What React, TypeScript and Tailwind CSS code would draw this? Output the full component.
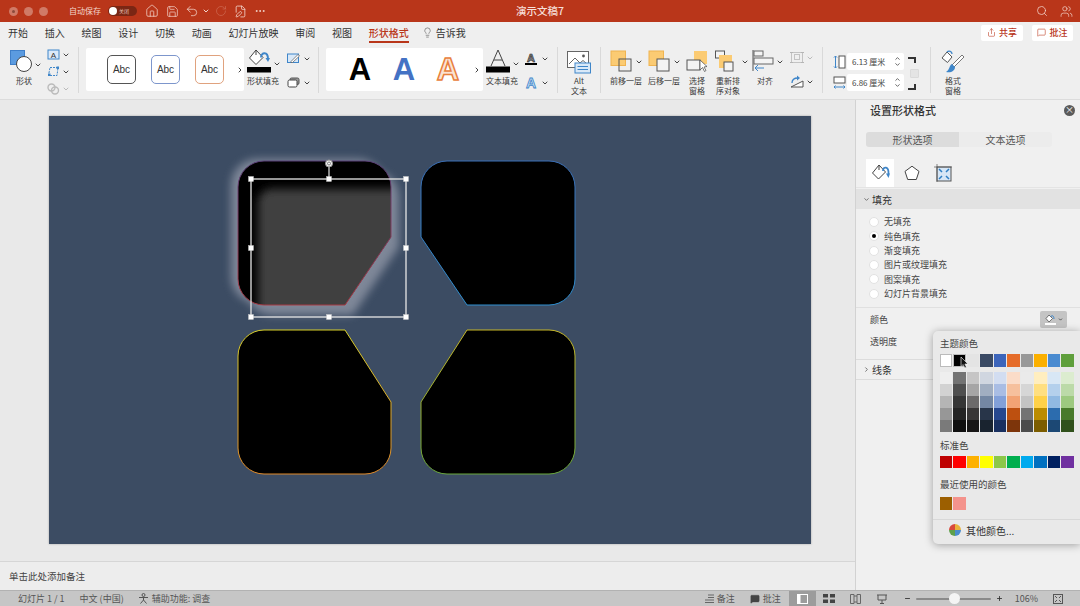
import React from "react";
import { ChevronDown, ChevronRight, ChevronUp, Home, Save, Undo2, RotateCw, FilePen, Ellipsis, Search, Users, Lightbulb, Share, MessageSquare, Plus, Minus } from "lucide-react";

const CJK = "font-['Noto_Sans_CJK_SC','Noto_Sans',sans-serif]";

const tabs = ["开始", "插入", "绘图", "设计", "切换", "动画", "幻灯片放映", "审阅", "视图"];
const fillOptions = ["无填充", "纯色填充", "渐变填充", "图片或纹理填充", "图案填充", "幻灯片背景填充"];

const themeRow = ["#ffffff", "#000000", "#e4e4e4", "#3a4a64", "#3c65bb", "#e56c2a", "#989898", "#fbb000", "#4a8bd0", "#5f9f3c"];
const themeRamps = [
  ["#eeeeee", "#d2d2d2", "#b5b5b5", "#979797", "#7a7a7a"],
  ["#737373", "#4f4f4f", "#363636", "#242424", "#0f0f0f"],
  ["#c6c5c5", "#a6a5a5", "#6c6a6a", "#383636", "#171616"],
  ["#d0d6e0", "#a1aec1", "#7487a3", "#283549", "#19232f"],
  ["#d2ddf1", "#a9bde4", "#82a0d9", "#27488f", "#193060"],
  ["#fbdcc8", "#f6c09d", "#f2a374", "#bd5010", "#7d350b"],
  ["#eaeaea", "#d6d6d6", "#c3c3c3", "#737373", "#4c4c4c"],
  ["#ffeebf", "#ffdf80", "#ffd148", "#bb8c00", "#7c5d00"],
  ["#d8e7f5", "#b4d0ec", "#90b9e2", "#2c6cae", "#1c4874"],
  ["#dceccf", "#bcdaa8", "#9dc97f", "#487a2a", "#30511c"],
];
const standardColors = ["#be0000", "#ff0000", "#fdb100", "#ffff00", "#8cc748", "#00ae4e", "#00aaee", "#0070c0", "#002060", "#7030a0"];

const shapeTL = "M264 161H365A26 26 0 0 1 391 187V237L345 305H264A26 26 0 0 1 238 279V187A26 26 0 0 1 264 161Z";
const shapeTR = "M447 161H549A26 26 0 0 1 575 187V279A26 26 0 0 1 549 305H467L421 237V187A26 26 0 0 1 447 161Z";
const shapeBL = "M264 330H345L391 402V448A26 26 0 0 1 365 474H264A26 26 0 0 1 238 448V356A26 26 0 0 1 264 330Z";
const shapeBR = "M467 330H549A26 26 0 0 1 575 356V448A26 26 0 0 1 549 474H447A26 26 0 0 1 421 448V402Z";

const handles = [
  [251, 179], [329, 179], [406, 179],
  [251, 248], [406, 248],
  [251, 317], [329, 317], [406, 317],
];

const Chev = ({ className = "" }: { className?: string }) => (
  <ChevronDown className={`w-[8px] h-[8px] text-[#444] shrink-0 ${className}`} strokeWidth={3} />
);

const Divider = () => <div className="w-px h-[46px] mt-[4px] bg-[#d9d9d9] shrink-0" />;

const Label = ({ children }: { children: React.ReactNode }) => (
  <div className="text-[8px] leading-[9.5px] text-[#3a3a3a] text-center whitespace-nowrap">{children}</div>
);

const ShapesIcon = () => (
  <svg width="23" height="23" viewBox="0 0 23 23">
    <rect x="0.5" y="0.5" width="14" height="14" fill="#5b9be0" stroke="#3f7fc9" />
    <circle cx="14" cy="14" r="7.5" fill="#fff" stroke="#444" />
  </svg>
);

const TextBoxIcon = () => (
  <svg width="13" height="11" viewBox="0 0 13 11">
    <rect x="1" y="1" width="11" height="9" fill="#dbe9f8" stroke="#3f86c9" />
    <text x="6.5" y="8.5" fontSize="8" textAnchor="middle" fill="#333" fontFamily="Liberation Sans">A</text>
  </svg>
);

const EditPointsIcon = () => (
  <svg width="13" height="11" viewBox="0 0 13 11">
    <path d="M3 1.5H11L10 9.5H1.5Z" fill="none" stroke="#3f86c9" strokeDasharray="2 1" />
    <rect x="1" y="7.5" width="2.5" height="2.5" fill="#3f86c9" />
    <rect x="9.5" y="0.5" width="2.5" height="2.5" fill="#3f86c9" />
  </svg>
);

const MergeIcon = () => (
  <svg width="13" height="12" viewBox="0 0 13 12">
    <circle cx="4.5" cy="4.5" r="3.5" fill="none" stroke="#bbb" strokeWidth="1.4" />
    <circle cx="8" cy="7.5" r="3.5" fill="none" stroke="#bbb" strokeWidth="1.4" />
  </svg>
);

const BucketIcon = ({ bar = "#000" }: { bar?: string }) => (
  <svg width="25" height="25" viewBox="0 0 25 25">
    <path d="M9 2L2.5 10L9 16.5L16 9.5Z" fill="#fff" stroke="#444" />
    <path d="M9 2V7" stroke="#444" />
    <path d="M14 9.5C14 4 21 3 21 11" fill="none" stroke="#3f86c9" strokeWidth="2" />
    <path d="M18.5 10H23L21 14Z" fill="#3f86c9" />
    <rect x="0" y="19" width="24" height="5.5" fill={bar} />
  </svg>
);

const PenOutlineIcon = () => (
  <svg width="13" height="11" viewBox="0 0 13 11">
    <rect x="0.5" y="1" width="11" height="8.5" fill="#d8e8f8" stroke="#3f86c9" />
    <path d="M4 8.5L11 1.5L12.5 3L5.5 9.5H4Z" fill="#fff" stroke="#555" strokeWidth="0.7" />
  </svg>
);

const EffectIcon = () => (
  <svg width="13" height="11" viewBox="0 0 13 11">
    <rect x="3" y="1" width="9" height="6.5" rx="1.5" fill="#999" stroke="#555" />
    <rect x="1" y="3" width="9" height="7" rx="1.5" fill="#fff" stroke="#444" />
  </svg>
);

const TextFillIcon = () => (
  <svg width="25" height="25" viewBox="0 0 25 25">
    <path d="M5 18L12 2L19 18M8 12H16" fill="none" stroke="#444" strokeWidth="1" />
    <rect x="0" y="18.5" width="24" height="6" fill="#000" />
  </svg>
);

const AltTextIcon = () => (
  <svg width="24" height="23" viewBox="0 0 24 23">
    <rect x="0.5" y="0.5" width="21" height="16" fill="#fff" stroke="#666" />
    <path d="M2 13L8 7L13 12L16 9.5L20 13" fill="none" stroke="#666" />
    <circle cx="16.5" cy="5" r="1.4" fill="#555" />
    <rect x="8" y="12" width="15.5" height="10" fill="#d9e9f8" stroke="#3f86c9" />
    <path d="M10.5 15.5H21M10.5 18.5H21" stroke="#3f86c9" />
  </svg>
);

const ForwardIcon = ({ back = false }: { back?: boolean }) => (
  <svg width="22" height="22" viewBox="0 0 22 22">
    <rect x="1" y="1" width="14.5" height="14.5" fill="#fbcb73" stroke="#f0b451" />
    <rect x="9" y="9" width="12" height="12" fill={back ? "#f4f4f4" : "none"} stroke="#555" />
  </svg>
);

const PaneIcon = () => (
  <svg width="22" height="22" viewBox="0 0 22 22">
    <rect x="8" y="1" width="13" height="13" fill="#fbcb73" />
    <rect x="1" y="10" width="13" height="10" fill="#f4f4f4" stroke="#555" />
    <path d="M14 10L14 20L16.5 17.5L18.5 21.5L20 20.5L18 17L21 16.5Z" fill="#fff" stroke="#555" strokeWidth="0.8" />
  </svg>
);

const ReorderIcon = () => (
  <svg width="23" height="23" viewBox="0 0 23 23">
    <rect x="0.5" y="1" width="9" height="7" fill="#f4f4f4" stroke="#555" />
    <rect x="4" y="5" width="13" height="13" fill="#fbcb73" />
    <rect x="9" y="12" width="9" height="9" fill="#f4f4f4" stroke="#555" />
  </svg>
);

const AlignIcon = () => (
  <svg width="22" height="22" viewBox="0 0 22 22">
    <path d="M1 0V21" stroke="#555" />
    <rect x="2" y="1" width="9" height="5" fill="#f4f4f4" stroke="#666" />
    <rect x="2" y="8" width="19" height="6" fill="#f4f4f4" stroke="#666" />
    <path d="M12 18H3M6 15L3 18L6 21" fill="none" stroke="#3f86c9" />
  </svg>
);

const GroupIcon = () => (
  <svg width="14" height="13" viewBox="0 0 14 13">
    <rect x="1.5" y="1.5" width="11" height="10" fill="none" stroke="#c3c3c3" />
    <rect x="4.5" y="3.5" width="5" height="5" fill="none" stroke="#c3c3c3" />
    <path d="M0 1.5H3M11 1.5H14M0 11.5H3M11 11.5H14" stroke="#b5b5b5" />
  </svg>
);

const RotateIcon = () => (
  <svg width="14" height="13" viewBox="0 0 14 13">
    <path d="M1 12H13V6Z" fill="#fff" stroke="#555" />
    <path d="M2 8C2 4 5 3 8 3" fill="none" stroke="#3f86c9" strokeWidth="1.3" />
    <path d="M7 0.5L10 3L7 5.5Z" fill="#3f86c9" />
  </svg>
);

const HeightIcon = () => (
  <svg width="13" height="14" viewBox="0 0 13 14">
    <path d="M2.5 1V13M1 2.5L2.5 1L4 2.5M1 11.5L2.5 13L4 11.5" fill="none" stroke="#3f86c9" />
    <rect x="6" y="1" width="6" height="12" fill="#fff" stroke="#555" />
  </svg>
);

const WidthIcon = () => (
  <svg width="13" height="14" viewBox="0 0 13 14">
    <rect x="1" y="1" width="11" height="6" fill="#fff" stroke="#555" />
    <path d="M1 11H12M2.5 9.5L1 11L2.5 12.5M10.5 9.5L12 11L10.5 12.5" fill="none" stroke="#3f86c9" />
  </svg>
);

const PainterIcon = () => (
  <svg width="25" height="24" viewBox="0 0 25 24">
    <path d="M6 2L1 8L6.5 12.5L11 7Z" fill="#fff" stroke="#555" />
    <path d="M6 2C8 0 11 1.5 11 4" fill="none" stroke="#3f86c9" strokeWidth="1.3" />
    <path d="M23 7L13 17L11 15L21 5Z" fill="#fff" stroke="#555" strokeWidth="0.8" />
    <path d="M11 14C8 15 9 20 5 22C10 23 14 21 14 17Z" fill="#3f86c9" />
  </svg>
);

const Spinner = () => (
  <div className="flex flex-col items-center -space-y-[1px]">
    <ChevronUp className="w-[7px] h-[7px] text-[#555]" strokeWidth={3} />
    <ChevronDown className="w-[7px] h-[7px] text-[#555]" strokeWidth={3} />
  </div>
);

const SizeInput = ({ value }: { value: string }) => (
  <div className="w-[57px] h-[17px] bg-white rounded-[2px] flex items-center justify-between pl-[5px] pr-[3px] text-[8px] text-[#444]">
    <span className="whitespace-nowrap">{value}</span>
    <Spinner />
  </div>
);

const AbcBox = ({ border }: { border: string }) => (
  <div className={`w-[29px] h-[29px] rounded-[5px] border flex items-center justify-center text-[10px] text-[#333] font-['Liberation_Sans',sans-serif] ${border}`}>
    Abc
  </div>
);

const TitleBar = () => (
  <div className="h-[22px] bg-[#b9361a] flex items-center relative shrink-0 text-white">
    <div className="flex items-center gap-[6px] pl-[9px] w-[69px]">
      {[0, 1, 2].map((i) => (
        <div key={i} className="w-[9px] h-[9px] rounded-full bg-[#d07a66] flex items-center justify-center">
          {i === 0 && <div className="w-[3px] h-[3px] rounded-full bg-[#8c4a3c]" />}
        </div>
      ))}
    </div>
    <span className="text-[8px] text-[#f3d6cd] w-[39px] whitespace-nowrap">自动保存</span>
    <div className="w-[29px] h-[10px] rounded-full bg-[#7a2614] flex items-center pl-[1px] gap-[2px]">
      <div className="w-[8px] h-[8px] rounded-full bg-white" />
      <span className="text-[5px] text-[#e8c4ba]">关闭</span>
    </div>
    <div className="flex items-center ml-[8px] text-[#f3d6cd]">
      <Home className="w-[14px] h-[14px]" strokeWidth={1.3} />
      <Save className="w-[13px] h-[13px] ml-[7px]" strokeWidth={1.3} />
      <Undo2 className="w-[14px] h-[14px] ml-[6px]" strokeWidth={1.3} />
      <ChevronDown className="w-[8px] h-[8px] ml-[3px]" strokeWidth={3} />
      <RotateCw className="w-[12px] h-[12px] ml-[5px] text-[#cf6d56]" strokeWidth={1.3} />
      <FilePen className="w-[13px] h-[13px] ml-[7px]" strokeWidth={1.5} />
      <Ellipsis className="w-[12px] h-[12px] ml-[7px]" strokeWidth={2} />
    </div>
    <span className="absolute left-0 right-0 text-center text-[10.5px] font-medium text-[#f6dfd8] pointer-events-none">演示文稿7</span>
    <div className="ml-auto flex items-center gap-[12px] pr-[7px] text-[#f3d6cd]">
      <Search className="w-[12px] h-[12px]" strokeWidth={1.5} />
      <Users className="w-[13px] h-[13px]" strokeWidth={1.3} />
    </div>
  </div>
);

const TabBar = () => (
  <div className="h-[21px] bg-[#efefef] flex items-center pl-[8px] shrink-0 text-[10px] text-[#333]">
    <div className="flex items-center gap-[16.75px]">
      {tabs.map((t) => (
        <span key={t} className="whitespace-nowrap">{t}</span>
      ))}
      <span className="relative font-medium text-[#b9361a] whitespace-nowrap">
        形状格式
        <span className="absolute left-0 right-0 -bottom-[3px] h-[2px] bg-[#b9361a]" />
      </span>
    </div>
    <Lightbulb className="w-[11px] h-[11px] ml-[13px] text-[#555]" strokeWidth={1.3} />
    <span className="ml-[3px] whitespace-nowrap">告诉我</span>
    <div className="ml-auto flex items-center gap-[9px] pr-[7px]">
      <div className="w-[42px] h-[16px] bg-white rounded-[2px] flex items-center justify-center gap-[3px] text-[9px] font-medium text-[#b9361a]">
        <Share className="w-[9px] h-[9px]" strokeWidth={1.5} />
        共享
      </div>
      <div className="w-[41px] h-[16px] bg-white rounded-[2px] flex items-center justify-center gap-[3px] text-[9px] font-medium text-[#b9361a]">
        <MessageSquare className="w-[9px] h-[9px]" strokeWidth={1.5} />
        批注
      </div>
    </div>
  </div>
);

const Ribbon = () => (
  <div className="h-[57px] bg-[#efefef] border-b border-[#dcdcdc] flex items-start pl-[8px] shrink-0">
    {/* 形状 */}
    <div className="w-[70px] flex pt-[7px] shrink-0">
      <div className="flex flex-col items-center w-[32px]">
        <div className="flex items-end pr-[5px]">
          <ShapesIcon />
        </div>
        <div className="mt-[3px]"><Label>形状</Label></div>
      </div>
      <Chev className="mt-[11px] -ml-[6px]" />
      <div className="flex flex-col gap-[6px] ml-[5px] -mt-[1px]">
        <div className="flex items-center gap-[2px]"><TextBoxIcon /><Chev /></div>
        <div className="flex items-center gap-[2px]"><EditPointsIcon /><Chev /></div>
        <div className="flex items-center gap-[2px]"><MergeIcon /><Chev className="opacity-30" /></div>
      </div>
    </div>
    <Divider />
    {/* 样式 */}
    <div className="w-[158px] h-[43px] ml-[7px] mt-[5px] bg-white rounded-[2px] flex items-center pl-[21px] gap-[15px] shrink-0">
      <AbcBox border="border-[#555555]" />
      <AbcBox border="border-[#7d96cc]" />
      <AbcBox border="border-[#e0a27e]" />
      <ChevronRight className="w-[8px] h-[8px] -ml-[3px] text-[#444]" strokeWidth={3} />
    </div>
    {/* 形状填充 */}
    <div className="w-[74px] flex pt-[5px] shrink-0">
      <div className="flex flex-col items-start w-[31px] ml-[3px]">
        <BucketIcon />
        <div className="mt-[3px]"><Label>形状填充</Label></div>
      </div>
      <Chev className="mt-[12px] -ml-[5px]" />
      <div className="flex flex-col gap-[13px] ml-[6px] mt-[5px]">
        <div className="flex items-center gap-[3px]"><PenOutlineIcon /><Chev /></div>
        <div className="flex items-center gap-[3px]"><EffectIcon /><Chev /></div>
      </div>
    </div>
    <Divider />
    {/* 艺术字 */}
    <div className="w-[157px] h-[43px] ml-[7px] mt-[5px] bg-white rounded-[2px] flex items-center pl-[12px] shrink-0 font-['Liberation_Sans',sans-serif] font-bold">
      <span className="w-[44px] text-center text-[31px] leading-none text-black">A</span>
      <span className="w-[44px] text-center text-[31px] leading-none text-[#4472c4]">A</span>
      <span className="w-[44px] text-center text-[31px] leading-none text-[#fbe3d2] [-webkit-text-stroke:1.5px_#e8803c]">A</span>
      <ChevronRight className="w-[8px] h-[8px] text-[#444] ml-[3px]" strokeWidth={3} />
    </div>
    {/* 文本填充 */}
    <div className="w-[74px] flex pt-[5px] shrink-0">
      <div className="flex flex-col items-start w-[32px] ml-[3px]">
        <TextFillIcon />
        <div className="mt-[3px]"><Label>文本填充</Label></div>
      </div>
      <Chev className="mt-[12px] -ml-[6px]" />
      <div className="flex flex-col gap-[12px] ml-[5px] mt-[5px] font-['Liberation_Sans',sans-serif]">
        <div className="flex items-center gap-[4px]">
          <span className="w-[12px] h-[12px] text-[11px] leading-[10px] text-center font-bold text-[#888] border-b-2 border-black [-webkit-text-stroke:0.6px_#222]">A</span>
          <Chev />
        </div>
        <div className="flex items-center gap-[4px]">
          <span className="w-[12px] h-[12px] text-[14px] leading-[12px] text-center font-bold text-[#cde2f6] [-webkit-text-stroke:0.8px_#3f86c9]">A</span>
          <Chev />
        </div>
      </div>
    </div>
    <Divider />
    {/* Alt 文本 */}
    <div className="w-[42px] flex flex-col items-center pt-[8px] shrink-0">
      <AltTextIcon />
      <div className="mt-[2px]"><Label>Alt<br />文本</Label></div>
    </div>
    <Divider />
    {/* 排列 */}
    <div className="w-[221px] flex pt-[7px] pl-[9px] shrink-0">
      <div className="w-[38px] flex flex-col items-start">
        <div className="flex items-start gap-[3px]">
          <ForwardIcon />
          <Chev className="mt-[8px]" />
        </div>
        <div className="mt-[4px]"><Label>前移一层</Label></div>
      </div>
      <div className="w-[38px] flex flex-col items-start">
        <div className="flex items-start gap-[3px]">
          <ForwardIcon back />
          <Chev className="mt-[8px]" />
        </div>
        <div className="mt-[4px]"><Label>后移一层</Label></div>
      </div>
      <div className="w-[28px] flex flex-col items-center -ml-[3px]">
        <PaneIcon />
        <div className="mt-[4px]"><Label>选择<br />窗格</Label></div>
      </div>
      <div className="w-[43px] flex flex-col items-start">
        <div className="flex items-start gap-[3px] ml-[4px]">
          <ReorderIcon />
          <Chev className="mt-[8px]" />
        </div>
        <div className="mt-[3px] w-[34px]"><Label>重新排<br />序对象</Label></div>
      </div>
      <div className="w-[38px] flex flex-col items-start -ml-[2px]">
        <div className="flex items-start gap-[2px]">
          <AlignIcon />
          <Chev className="mt-[8px]" />
        </div>
        <div className="mt-[4px] w-[22px] ml-[2px]"><Label>对齐</Label></div>
      </div>
      <div className="flex flex-col gap-[11px] mt-[1px]">
        <div className="flex items-center gap-[2px]"><GroupIcon /><Chev className="opacity-30" /></div>
        <div className="flex items-center gap-[2px]"><RotateIcon /><Chev /></div>
      </div>
    </div>
    <Divider />
    {/* 大小 */}
    <div className="w-[107px] flex items-start pt-[10px] pl-[10px] shrink-0">
      <div className="flex flex-col gap-[4px]">
        <div className="flex items-center gap-[1px]"><HeightIcon /><SizeInput value="6.13 厘米" /></div>
        <div className="flex items-center gap-[1px]"><WidthIcon /><SizeInput value="6.86 厘米" /></div>
      </div>
      <div className="flex flex-col items-start ml-[4px] mt-[4px]">
        <div className="w-[8px] h-[6px] border-t-2 border-r-2 border-[#333]" />
        <div className="w-[9px] h-[9px] ml-[2px] mt-[6px] bg-[#e4e4e4] border border-[#dadada] rounded-[1px]" />
        <div className="w-[8px] h-[6px] border-b-2 border-r-2 border-[#333] mt-[6px]" />
      </div>
    </div>
    <Divider />
    {/* 格式窗格 */}
    <div className="w-[44px] flex flex-col items-center pt-[7px] shrink-0">
      <PainterIcon />
      <div className="mt-[2px]"><Label>格式<br />窗格</Label></div>
    </div>
  </div>
);

const Slide = () => (
  <div className="w-[762px] h-[428px] bg-[#3c4c63] shadow-[0_0_2px_rgba(0,0,0,0.3)]">
    {/* artwork uses page coordinates, hence the viewBox offset */}
    <svg width="762" height="428" viewBox="49 116 762 428">
      <defs>
        <filter id="glow" x="-30%" y="-30%" width="160%" height="160%"><feGaussianBlur stdDeviation="4.5" /></filter>
        <filter id="soft" x="-30%" y="-30%" width="160%" height="160%"><feGaussianBlur stdDeviation="4" /></filter>
        <clipPath id="clipTL"><path d={shapeTL} /></clipPath>
        <linearGradient id="strokeTL" x1="0" y1="0" x2="0" y2="1">
          <stop offset="0" stopColor="#5a3f78" />
          <stop offset="1" stopColor="#a83a44" />
        </linearGradient>
        <linearGradient id="strokeTR" x1="0" y1="0" x2="0" y2="1">
          <stop offset="0" stopColor="#3a6fb8" />
          <stop offset="1" stopColor="#2f8fd0" />
        </linearGradient>
        <linearGradient id="strokeBL" x1="0" y1="0" x2="0" y2="1">
          <stop offset="0" stopColor="#d8d02a" />
          <stop offset="1" stopColor="#e08a2a" />
        </linearGradient>
        <linearGradient id="strokeBR" x1="0" y1="0" x2="0" y2="1">
          <stop offset="0" stopColor="#c8b828" />
          <stop offset="1" stopColor="#6aa83c" />
        </linearGradient>
      </defs>
      {/* ghost of the dragged shape: soft halo up-left and down-right */}
      <g filter="url(#glow)" fill="#8f96a6" opacity="0.8">
        <path d={shapeTL} transform="translate(-7 -2)" />
        <path d={shapeTL} transform="translate(8 10)" />
      </g>
      <path d={shapeTL} fill="#000" />
      <g clipPath="url(#clipTL)">
        <rect x="258" y="189" width="170" height="150" rx="14" fill="#414141" filter="url(#soft)" />
      </g>
      <path d={shapeTL} fill="none" stroke="url(#strokeTL)" />
      <path d={shapeTR} fill="#000" stroke="url(#strokeTR)" />
      <path d={shapeBL} fill="#000" stroke="url(#strokeBL)" />
      <path d={shapeBR} fill="#000" stroke="url(#strokeBR)" />
      {/* selection frame */}
      <rect x="251" y="179" width="155" height="138" fill="none" stroke="#e6e6e6" strokeWidth="1.3" />
      <path d="M329 179V167" stroke="#e6e6e6" strokeWidth="1.2" />
      <circle cx="329" cy="163.5" r="3.5" fill="#f2f2f2" stroke="#999" />
      <circle cx="329" cy="163.5" r="1.5" fill="none" stroke="#555" strokeWidth="0.7" />
      {handles.map(([x, y]) => (
        <rect key={`${x}-${y}`} x={x - 2.5} y={y - 2.5} width="5" height="5" fill="#fff" stroke="#ccc" strokeWidth="0.4" />
      ))}
    </svg>
  </div>
);

const PanelHeaderRow = ({ open, title }: { open: boolean; title: string }) => (
  <div className={`flex items-center pl-[7px] gap-[2px] text-[10px] text-[#333] ${open ? "h-[20px] bg-[#e2e2e2]" : "h-[20px] border-b border-[#dcdcdc]"}`}>
    {open ? (
      <ChevronDown className="w-[7px] h-[7px] text-[#666]" strokeWidth={3} />
    ) : (
      <ChevronRight className="w-[7px] h-[7px] text-[#666]" strokeWidth={3} />
    )}
    <span>{title}</span>
  </div>
);

const ColorPopup = () => (
  <div className="absolute left-[77px] top-[231px] w-[147px] h-[213px] bg-[#e9e9e9] rounded-l-[5px] shadow-[0_1px_8px_rgba(0,0,0,0.35)] pl-[7px] pt-[6px]">
    <div className="text-[9.5px] leading-[13px] text-[#444]">主题颜色</div>
    <div className="flex gap-[1.3px] mt-[4px] relative">
      {themeRow.map((c, i) => (
        <div
          key={c}
          className={`w-[12.2px] h-[12.5px] ${i < 2 ? "border border-[#bbb]" : ""}`}
          style={{ backgroundColor: c }}
        />
      ))}
      <svg className="absolute left-[20px] top-[2px]" width="9" height="13" viewBox="0 0 9 13">
        <path d="M1 1V10.5L3.2 8.6L4.8 12L6.4 11.2L4.9 8H8Z" fill="#111" stroke="#fff" strokeWidth="0.6" />
      </svg>
    </div>
    <div className="flex gap-[1.3px] mt-[5px]">
      {themeRamps.map((ramp, i) => (
        <div key={i} className="flex flex-col">
          {ramp.map((c, j) => (
            <div key={j} className="w-[12.2px] h-[12px]" style={{ backgroundColor: c }} />
          ))}
        </div>
      ))}
    </div>
    <div className="text-[9.5px] leading-[13px] text-[#444] mt-[7px]">标准色</div>
    <div className="flex gap-[1.3px] mt-[4px]">
      {standardColors.map((c) => (
        <div key={c} className="w-[12.2px] h-[12.5px]" style={{ backgroundColor: c }} />
      ))}
    </div>
    <div className="text-[9.5px] leading-[13px] text-[#444] mt-[10px]">最近使用的颜色</div>
    <div className="flex gap-[1.3px] mt-[6px]">
      <div className="w-[12.2px] h-[12.5px] bg-[#9c5f00]" />
      <div className="w-[12.2px] h-[12.5px] bg-[#f4938c]" />
    </div>
    <div className="border-t border-[#d8d8d8] mt-[9px] -ml-[7px] pl-[16px] pt-[3px] flex items-center gap-[5px] text-[10px] text-[#333]">
      <div className="w-[12px] h-[12px] rounded-full bg-[conic-gradient(#e9b23a_0deg,#e9b23a_90deg,#4a8ccd_90deg,#4a8ccd_180deg,#5fa04a_180deg,#5fa04a_270deg,#d9483a_270deg)]" />
      <span>其他颜色...</span>
    </div>
  </div>
);

const FormatPanel = () => (
  <div className="w-[225px] h-full bg-[#f0f0f0] border-l border-[#d2d2d2] relative shrink-0">
    <div className="flex items-center justify-between h-[21px] pl-[14px] pr-[5px]">
      <span className="text-[11px] font-medium text-[#333]">设置形状格式</span>
      <div className="w-[11px] h-[11px] rounded-full bg-[#5a5a5a] text-white text-[9px] leading-[10px] text-center">×</div>
    </div>
    <div className="mx-[10px] mt-[11px] w-[186px] h-[15px] bg-[#ececec] rounded-[3px] flex text-[10px] text-[#555] leading-[15px]">
      <div className="w-[93px] text-center bg-[#dcdcdc] rounded-l-[3px]">形状选项</div>
      <div className="w-[93px] text-center">文本选项</div>
    </div>
    <div className="flex items-end h-[28px] mt-[13px] px-[10px] border-b border-[#e4e4e4] gap-[9px]">
      <div className="w-[28px] h-[28px] bg-white flex items-center justify-center">
        <svg width="19" height="18" viewBox="0 0 19 18">
          <path d="M8 1L1.5 9L7.5 15L14.5 8Z" fill="#fff" stroke="#444" />
          <path d="M8 1V6" stroke="#444" />
          <path d="M12 7C12 2 18 2 17.5 10" fill="none" stroke="#3f86c9" strokeWidth="1.8" />
          <path d="M15 9.5H19L17.5 14Z" fill="#3f86c9" />
        </svg>
      </div>
      <div className="w-[18px] h-[28px] flex items-center justify-center">
        <svg width="16" height="16" viewBox="0 0 16 16">
          <path d="M8 1.2L15 6.4L12.3 14.5H3.7L1 6.4Z" fill="#fff" stroke="#444" />
        </svg>
      </div>
      <div className="w-[26px] h-[28px] flex items-center justify-center">
        <svg width="18" height="18" viewBox="0 0 18 18">
          <rect x="3" y="3" width="14" height="14" fill="#d6e6f6" stroke="#555" />
          <path d="M0 3H18M3 0V18" stroke="#555" strokeWidth="0.7" />
          <path d="M5 5L8 8M15 5L12 8M5 15L8 12M15 15L12 12" stroke="#2f7fc4" strokeWidth="1.5" />
        </svg>
      </div>
    </div>
    <div className="mt-[1px]">
      <PanelHeaderRow open title="填充" />
    </div>
    <div className="flex flex-col pl-[13px] pt-[6px] pb-[6px] border-b border-[#e0e0e0] mx-0">
      {fillOptions.map((o, i) => (
        <div key={o} className="flex items-center h-[14.3px] gap-[5px] text-[9px] text-[#444]">
          <div className="w-[10px] h-[10px] rounded-full bg-white border border-[#e2e2e2] flex items-center justify-center">
            {i === 1 && <div className="w-[4px] h-[4px] rounded-full bg-black" />}
          </div>
          <span className="whitespace-nowrap">{o}</span>
        </div>
      ))}
    </div>
    <div className="flex items-center justify-between h-[24px] pl-[14px] pr-[13px] text-[9px] text-[#444]">
      <span>颜色</span>
      <div className="w-[27px] h-[17px] bg-[#c4c4c4] rounded-[2px] flex items-center justify-center gap-[2px]">
        <div className="flex flex-col items-center">
          <svg width="10" height="9" viewBox="0 0 10 9">
            <path d="M4 1L1 4.5L4 8L7.5 4.5Z" fill="#fff" stroke="#444" strokeWidth="0.7" />
            <path d="M6 3C6 1 9 1 9 5" fill="none" stroke="#3f86c9" />
          </svg>
          <div className="w-[11px] h-[2px] bg-white" />
        </div>
        <ChevronDown className="w-[5px] h-[5px] text-[#444]" strokeWidth={4} />
      </div>
    </div>
    <div className="h-[28px] pl-[14px] pt-[3px] text-[9px] leading-[13px] text-[#444] border-b border-[#dcdcdc]">透明度</div>
    <PanelHeaderRow open={false} title="线条" />
    <ColorPopup />
  </div>
);

const StatusBar = () => (
  <div className="h-[16px] bg-[#c6c6c6] border-t border-[#b2b2b2] flex items-center pl-[18px] text-[9px] text-[#555] shrink-0">
    <span className="whitespace-nowrap">幻灯片 1 / 1</span>
    <span className="ml-[15px] whitespace-nowrap">中文 (中国)</span>
    <svg className="ml-[14px]" width="11" height="11" viewBox="0 0 11 11">
      <circle cx="5.5" cy="2" r="1.5" fill="none" stroke="#555" />
      <path d="M1 4.5H10M5.5 4.5V7L2.5 10.5M5.5 7L8.5 10.5" fill="none" stroke="#555" />
    </svg>
    <span className="ml-[3px] whitespace-nowrap">辅助功能: 调查</span>
    <div className="ml-auto flex items-center h-full">
      <svg width="9" height="9" viewBox="0 0 9 9">
        <path d="M3 1H9M3 3.5H9M0 6H9M0 8.5H9" stroke="#666" />
      </svg>
      <span className="ml-[3px] whitespace-nowrap">备注</span>
      <MessageSquare className="w-[10px] h-[10px] ml-[15px] text-[#444] fill-[#444]" strokeWidth={1} />
      <span className="ml-[3px] whitespace-nowrap">批注</span>
      <div className="w-[27px] h-full bg-[#9c9c9c] ml-[8px] flex items-center justify-center">
        <svg width="11" height="10" viewBox="0 0 11 10">
          <rect x="0.5" y="0.5" width="10" height="9" fill="none" stroke="#fff" />
          <rect x="0.5" y="0.5" width="3" height="9" fill="#fff" />
        </svg>
      </div>
      <svg className="ml-[7px]" width="12" height="9" viewBox="0 0 12 9">
        <path d="M0 0H5V3.5H0ZM7 0H12V3.5H7ZM0 5.5H5V9H0ZM7 5.5H12V9H7Z" fill="#444" />
      </svg>
      <svg className="ml-[15px]" width="11" height="10" viewBox="0 0 11 10">
        <path d="M0.5 0.5H4V9.5H0.5ZM7 0.5H10.5V9.5H7ZM4 2H7M4 8H7" fill="none" stroke="#666" />
      </svg>
      <svg className="ml-[16px]" width="10" height="10" viewBox="0 0 10 10">
        <path d="M0 1H10M1 1V6H9V1M5 6V9M3 9.5H7" fill="none" stroke="#555" />
      </svg>
      <Minus className="w-[7px] h-[7px] ml-[17px] text-[#333]" strokeWidth={3} />
      <div className="w-[75px] h-[2px] bg-[#8a8a8a] ml-[5px] flex items-center rounded-full">
        <div className="w-[11px] h-[11px] rounded-full bg-[#f4f4f4] ml-[33px]" />
      </div>
      <Plus className="w-[7px] h-[7px] ml-[5px] text-[#333]" strokeWidth={3} />
      <span className="ml-[12px] whitespace-nowrap">106%</span>
      <svg className="ml-[15px] mr-[17px]" width="10" height="10" viewBox="0 0 10 10">
        <rect x="0.5" y="0.5" width="9" height="9" fill="none" stroke="#555" />
        <path d="M2 2L4 4M8 2L6 4M2 8L4 6M8 8L6 6" stroke="#555" />
      </svg>
    </div>
  </div>
);

export default function App() {
  return (
    <div className={`w-[1080px] h-[606px] overflow-hidden flex flex-col bg-[#ebebeb] ${CJK}`}>
      <TitleBar />
      <TabBar />
      <Ribbon />
      <div className="flex h-[490px]">
        <div className="w-[855px] flex flex-col shrink-0">
          <div className="h-[461px] pl-[49px] pt-[16px] bg-[#e9e9e9]">
            <Slide />
          </div>
          <div className="h-[29px] border-t border-[#d6d6d6] bg-[#ededed] flex items-center pl-[9px] text-[9.5px] text-[#444]">
            单击此处添加备注
          </div>
        </div>
        <FormatPanel />
      </div>
      <StatusBar />
    </div>
  );
}
